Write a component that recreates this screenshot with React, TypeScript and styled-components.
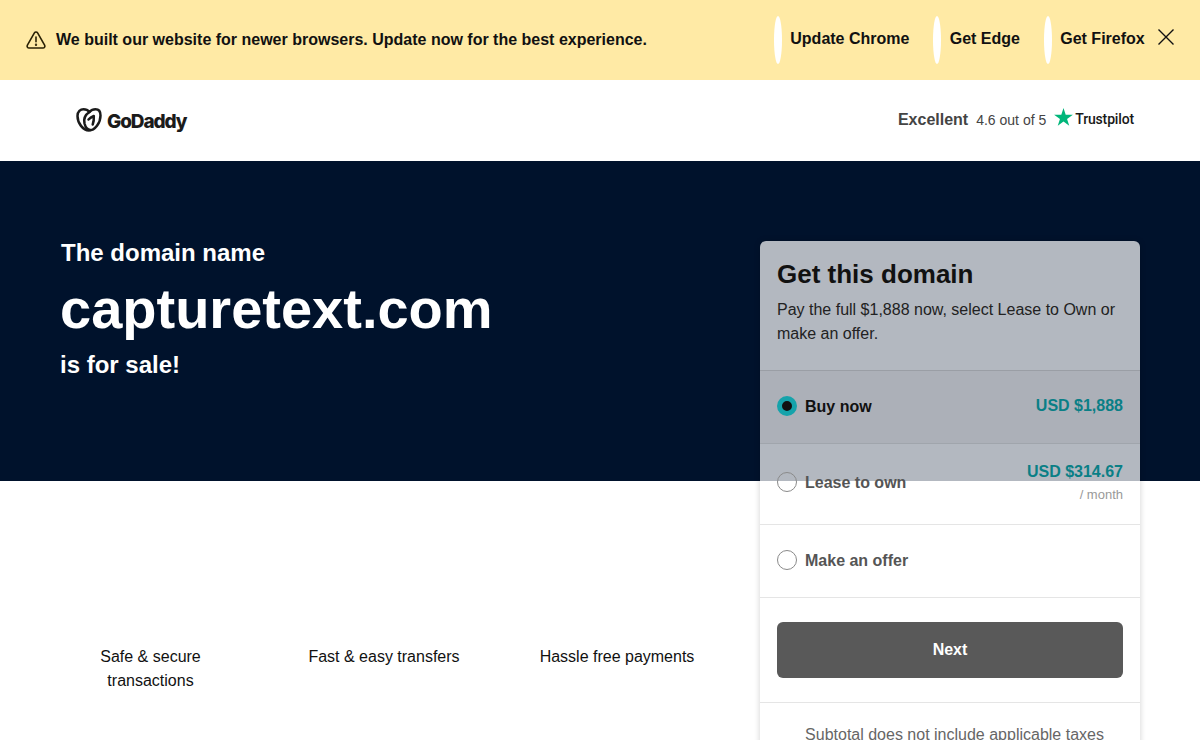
import React from "react";
import styled, { createGlobalStyle } from "styled-components";

const Global = createGlobalStyle`
  html, body { margin: 0; padding: 0; height: 740px; overflow: hidden; background: #fff; }
  body { font-family: "Liberation Sans", Arial, sans-serif; color: #111; }
  * { box-sizing: border-box; }
`;

const Page = styled.div`
  position: relative;
  width: 1200px;
  height: 740px;
  overflow: hidden;
`;

const Banner = styled.div`
  height: 80px;
  background: #ffeaa5;
  display: flex;
  align-items: center;
  padding: 0 26px 0 26px;
`;

const BannerMessage = styled.div`
  display: flex;
  align-items: center;
  gap: 10px;
  flex: 1;
  font-size: 16px;
  font-weight: 700;
  color: #111;
`;

const BannerLinks = styled.div`
  display: flex;
  align-items: center;
  gap: 24px;
`;

const BrowserLink = styled.a`
  display: flex;
  align-items: center;
  gap: 8.3px;
  font-size: 16px;
  font-weight: 700;
  color: #111;
`;

const LinkLabel = styled.span`
  margin-bottom: 3px;
`;

const Pill = styled.span`
  width: 8px;
  height: 48px;
  border-radius: 50%;
  background: #fff;
`;

const CloseButton = styled.button`
  display: flex;
  border: 0;
  padding: 0;
  background: none;
  margin-left: 13.3px;
  margin-top: -6px;
`;

const Header = styled.header`
  height: 81px;
  display: flex;
  align-items: center;
  justify-content: space-between;
  padding: 0 66px 2px 76px;
`;

const Logo = styled.div`
  display: flex;
  align-items: center;
  gap: 5px;
`;

const LogoWord = styled.span`
  font-family: Inter, sans-serif;
  font-size: 19px;
  font-weight: 800;
  letter-spacing: -1.1px;
  color: #1b1b1b;
  margin-top: 4px;
`;

const Rating = styled.div`
  display: flex;
  align-items: center;
  color: #444;
`;

const RatingWord = styled.span`
  font-size: 16px;
  font-weight: 700;
  margin-right: 8px;
`;

const RatingScore = styled.span`
  font-size: 14px;
  margin-right: 8px;
`;

const TrustpilotWord = styled.span`
  font-family: Roboto, sans-serif;
  font-size: 14px;
  font-weight: 500;
  letter-spacing: -0.15px;
  color: #191919;
  margin-left: 2px;
  margin-bottom: 2px;
`;

const Hero = styled.section`
  height: 320px;
  background: #00122c;
  color: #fff;
  padding: 76px 0 0 60px;
  font-weight: 700;
`;

const HeroLead = styled.div`
  font-size: 24px;
  line-height: 32px;
  padding-left: 1px;
`;

const DomainName = styled.h1`
  margin: 4px 0 0;
  font-size: 56px;
  line-height: 72px;
  font-weight: 700;
`;

const HeroTail = styled.div`
  font-size: 24px;
  line-height: 32px;
  margin-top: 4px;
`;

const Features = styled.section`
  display: grid;
  grid-template-columns: repeat(3, 233px);
  padding: 164px 0 0 34px;
`;

const Feature = styled.div`
  padding: 0 30px;
  font-size: 16px;
  line-height: 24px;
  text-align: center;
  color: #111;
`;

const FeatureWide = styled(Feature)`
  padding: 0 0 0 1px;
`;

const Card = styled.aside`
  position: absolute;
  top: 241px;
  left: 760px;
  width: 380px;
  height: 540px;
  border-radius: 6px;
  background: rgba(255, 255, 255, 0.7);
  box-shadow: 0 0 6px rgba(0, 0, 0, 0.18);
`;

const CardIntro = styled.div`
  height: 129px;
  padding: 17px 17px 0;
`;

const CardTitle = styled.h2`
  margin: 0 0 8px;
  font-size: 26px;
  line-height: 32px;
  font-weight: 700;
  color: #111;
`;

const CardText = styled.p`
  margin: 0;
  font-size: 16px;
  line-height: 24px;
  color: #222;
`;

const Option = styled.div<{ $selected?: boolean; $tall?: boolean }>`
  height: ${(p) => (p.$tall ? 81 : 73)}px;
  border-top: 1px solid rgba(0, 0, 0, 0.1);
  background: ${(p) => (p.$selected ? "rgba(0, 0, 0, 0.04)" : "transparent")};
  display: flex;
  align-items: center;
  justify-content: space-between;
  padding: 0 17px ${(p) => (p.$tall ? 4 : 2)}px;
`;

const OptionLabel = styled.div<{ $selected?: boolean }>`
  display: flex;
  align-items: center;
  gap: 8px;
  font-size: 16px;
  font-weight: 700;
  color: ${(p) => (p.$selected ? "#111" : "#555")};
`;

const OptionText = styled.span`
  margin-top: 2px;
`;

const Radio = styled.span<{ $selected?: boolean }>`
  width: 20px;
  height: 20px;
  border-radius: 50%;
  background: ${(p) => (p.$selected ? "#111" : "transparent")};
  border: ${(p) => (p.$selected ? "5.5px solid #16a3ab" : "1px solid #8a8a8a")};
`;

const PriceBox = styled.div`
  text-align: right;
`;

const Price = styled.div`
  font-size: 16px;
  line-height: 20px;
  font-weight: 700;
  color: #0a7f86;
`;

const PriceNote = styled.div`
  font-size: 13px;
  line-height: 16px;
  margin-top: 5px;
  color: #999;
`;

const ActionArea = styled.div`
  height: 105px;
  border-top: 1px solid rgba(0, 0, 0, 0.1);
  padding: 24px 17px 0;
`;

const NextButton = styled.button`
  width: 100%;
  height: 56px;
  border: 0;
  border-radius: 6px;
  background: #595959;
  color: #fff;
  font-family: inherit;
  font-size: 16px;
  font-weight: 700;
`;

const Footnote = styled.div`
  border-top: 1px solid rgba(0, 0, 0, 0.1);
  padding: 22px 0 0 9px;
  font-size: 16px;
  line-height: 20px;
  text-align: center;
  color: #666;
`;

export default function App() {
  return (
    <Page>
      <Global />
      <Banner>
        <BannerMessage>
          <svg width="20" height="20" viewBox="0 0 20 20" fill="none" stroke="#2b2205" strokeWidth="1.6" strokeLinejoin="round" strokeLinecap="round">
            <path d="M8.4 2.9 C9.1 1.7 10.9 1.7 11.6 2.9 L18.6 15.2 C19.3 16.5 18.4 18 17 18 H3 C1.6 18 0.7 16.5 1.4 15.2 Z" />
            <path d="M10 7 V11.8" />
            <circle cx="10" cy="14.8" r="0.4" fill="#2b2205" />
          </svg>
          We built our website for newer browsers. Update now for the best experience.
        </BannerMessage>
        <BannerLinks>
          <BrowserLink><Pill /><LinkLabel>Update Chrome</LinkLabel></BrowserLink>
          <BrowserLink><Pill /><LinkLabel>Get Edge</LinkLabel></BrowserLink>
          <BrowserLink><Pill /><LinkLabel>Get Firefox</LinkLabel></BrowserLink>
        </BannerLinks>
        <CloseButton aria-label="Close">
          <svg width="16" height="16" viewBox="0 0 16 16" stroke="#111" strokeWidth="1.4" fill="none">
            <path d="M0.5 0.5 L15.5 15.5 M15.5 0.5 L0.5 15.5" />
          </svg>
        </CloseButton>
      </Banner>
      <Header>
        <Logo>
          <svg width="26" height="24" viewBox="0 0 26 24" fill="none" stroke="#1b1b1b" strokeWidth="2.5" strokeLinecap="round" strokeLinejoin="round">
            <path d="M13 22.5 C7 22.5 1.5 15 1.5 8 C1.5 3.5 4.5 1.3 7.5 1.3 C10 1.3 12 2.3 13.5 4 C15 2.3 17.5 1.3 19.5 1.3 C22.5 1.3 24.5 3.5 24.5 7.5 C24.5 15 19 22.5 13 22.5 Z" />
            <path d="M13.5 4 C9.5 6.5 7.5 11 8.5 15.5 C9.5 19.5 12 21.8 14.5 22" />
            <path d="M12.5 11.5 C14 9.8 16 8.7 17.8 8 C18 11 17.7 14 16.7 16.5" />
          </svg>
          <LogoWord>GoDaddy</LogoWord>
        </Logo>
        <Rating>
          <RatingWord>Excellent</RatingWord>
          <RatingScore>4.6 out of 5</RatingScore>
          <svg width="19" height="24" viewBox="0 0 18 23">
            <path d="M9 0 L11.1 6.5 H18 L12.4 10.5 L14.5 17 L9 13 L3.5 17 L5.6 10.5 L0 6.5 H6.9 Z" fill="#00b67a" />
          </svg>
          <TrustpilotWord>Trustpilot</TrustpilotWord>
        </Rating>
      </Header>
      <Hero>
        <HeroLead>The domain name</HeroLead>
        <DomainName>capturetext.com</DomainName>
        <HeroTail>is for sale!</HeroTail>
      </Hero>
      <Features>
        <Feature>Safe &amp; secure transactions</Feature>
        <FeatureWide>Fast &amp; easy transfers</FeatureWide>
        <FeatureWide>Hassle free payments</FeatureWide>
      </Features>
      <Card>
        <CardIntro>
          <CardTitle>Get this domain</CardTitle>
          <CardText>Pay the full $1,888 now, select Lease to Own or make an offer.</CardText>
        </CardIntro>
        <Option $selected>
          <OptionLabel $selected><Radio $selected /><OptionText>Buy now</OptionText></OptionLabel>
          <Price>USD $1,888</Price>
        </Option>
        <Option $tall>
          <OptionLabel><Radio /><OptionText>Lease to own</OptionText></OptionLabel>
          <PriceBox>
            <Price>USD $314.67</Price>
            <PriceNote>/ month</PriceNote>
          </PriceBox>
        </Option>
        <Option>
          <OptionLabel><Radio /><OptionText>Make an offer</OptionText></OptionLabel>
        </Option>
        <ActionArea>
          <NextButton>Next</NextButton>
        </ActionArea>
        <Footnote>Subtotal does not include applicable taxes</Footnote>
      </Card>
    </Page>
  );
}
